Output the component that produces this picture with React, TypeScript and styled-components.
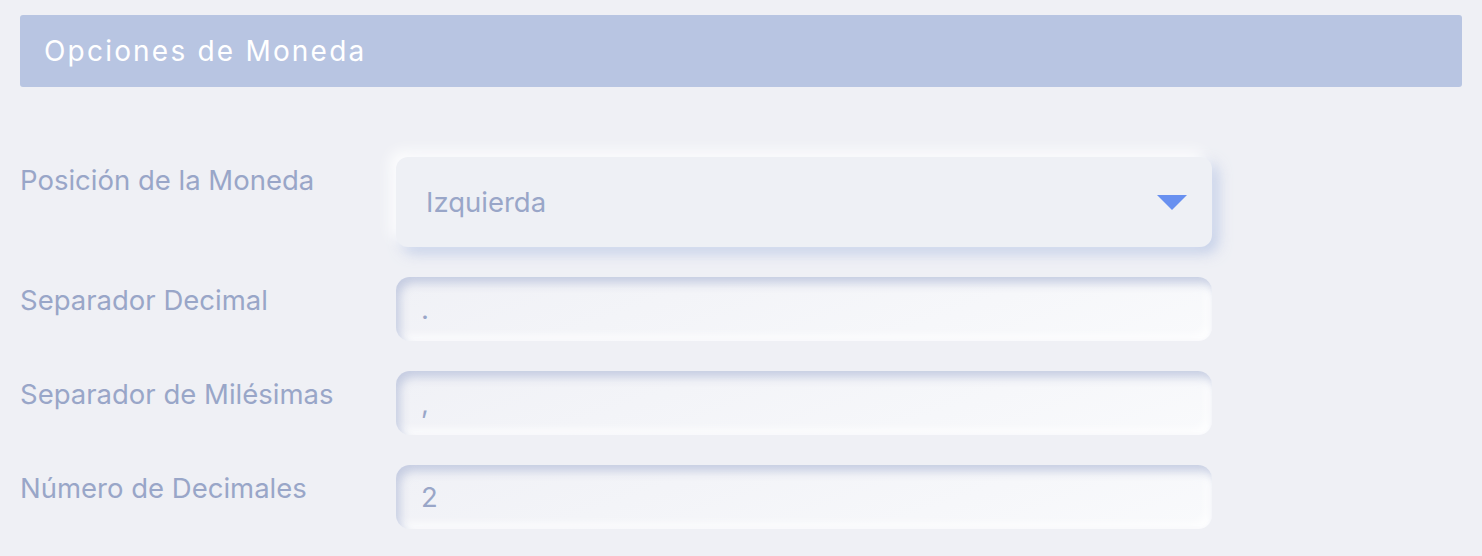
import React from 'react';
import styled, { createGlobalStyle } from 'styled-components';

const GlobalStyle = createGlobalStyle`
  html, body {
    margin: 0;
    padding: 0;
    background: #eff0f5;
    font-family: Inter, "Noto Sans", sans-serif;
  }
`;

const Page = styled.div`
  padding: 15px 20px 0 20px;
`;

const Header = styled.div`
  height: 72px;
  display: flex;
  align-items: center;
  padding: 0 24px;
  background: #b8c5e2;
  border-radius: 3px;
  color: #ffffff;
  font-size: 28px;
  letter-spacing: 2.2px;
`;

const Form = styled.div`
  display: grid;
  grid-template-columns: 376px 816px;
  row-gap: 30px;
  margin-top: 70px;
`;

const Label = styled.div`
  padding-top: 6px;
  font-size: 27.5px;
  color: #99a6c8;
`;

const Select = styled.div`
  height: 90px;
  display: flex;
  align-items: center;
  justify-content: space-between;
  padding: 0 25px 0 30px;
  box-sizing: border-box;
  border-radius: 12px;
  background: #eef0f5;
  box-shadow: -6px -6px 14px rgba(255, 255, 255, 0.9), 6px 6px 14px rgba(176, 192, 226, 0.7);
  font-size: 27.5px;
  color: #99a6c8;
`;

const Caret = styled.div`
  width: 0;
  height: 0;
  border-left: 15px solid transparent;
  border-right: 15px solid transparent;
  border-top: 15px solid #6890f0;
`;

const Input = styled.div`
  height: 64px;
  display: flex;
  align-items: center;
  padding: 0 25px;
  box-sizing: border-box;
  border-radius: 14px;
  background: linear-gradient(160deg, #f0f1f6 0%, #f9fafc 100%);
  box-shadow: inset 4px 6px 10px rgba(186, 195, 220, 0.8), inset -5px -5px 10px rgba(255, 255, 255, 0.9);
  font-size: 27.5px;
  color: #99a6c8;
`;

const fields = [
  { label: 'Separador Decimal', value: '.' },
  { label: 'Separador de Milésimas', value: ',' },
  { label: 'Número de Decimales', value: '2' },
];

export default function App() {
  return (
    <Page>
      <GlobalStyle />
      <Header>Opciones de Moneda</Header>
      <Form>
        <Label>Posición de la Moneda</Label>
        <Select>
          Izquierda
          <Caret />
        </Select>
        {fields.map((f) => (
          <React.Fragment key={f.label}>
            <Label>{f.label}</Label>
            <Input>{f.value}</Input>
          </React.Fragment>
        ))}
      </Form>
    </Page>
  );
}
